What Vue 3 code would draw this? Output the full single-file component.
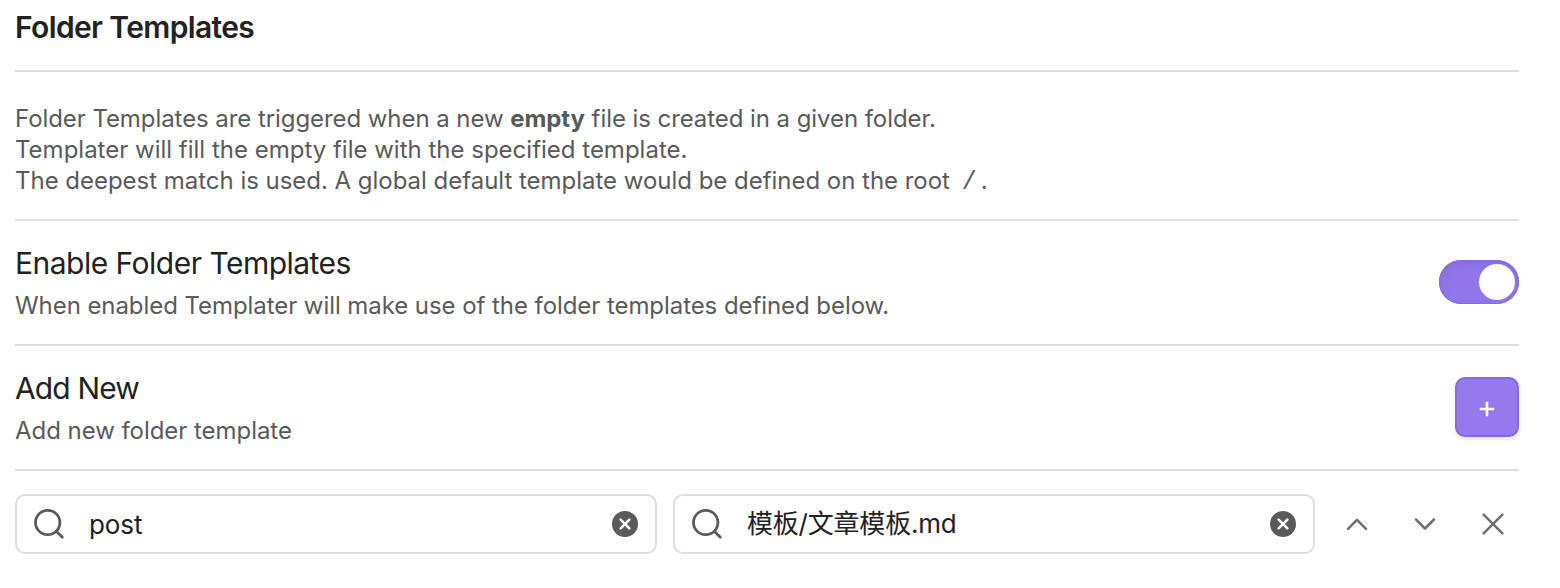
<script setup>
import { ref } from 'vue'

const enabled = ref(true)
const fields = ref([
  { value: 'post', cls: 'latin' },
  { value: '模板/文章模板.md', cls: 'cjk' },
])
</script>

<template>
  <main class="settings">
    <header class="heading"><h1>Folder Templates</h1></header>

    <section class="info">
      <p class="l1">Folder Templates are triggered when a new <strong>empty</strong> file is created in a given folder.</p>
      <p class="l2">Templater will fill the empty file with the specified template.</p>
      <p class="l3">The deepest match is used. A global default template would be defined on the root <code>/</code>.</p>
    </section>

    <section class="item">
      <div>
        <h2 class="n1">Enable Folder Templates</h2>
        <p class="desc d1">When enabled Templater will make use of the folder templates defined below.</p>
      </div>
      <button class="toggle" :class="{ on: enabled }" role="switch" :aria-checked="enabled" @click="enabled = !enabled">
        <span class="thumb"></span>
      </button>
    </section>

    <section class="item">
      <div>
        <h2 class="n2">Add New</h2>
        <p class="desc d2">Add new folder template</p>
      </div>
      <button class="add">
        <svg width="16" height="16" viewBox="0 0 16 16"><path d="M8 .8v14.4M.8 8h14.4" /></svg>
      </button>
    </section>

    <section class="template-row">
      <div v-for="(f, i) in fields" :key="i" class="search">
        <svg class="glass" width="34" height="34" viewBox="0 0 34 34">
          <circle cx="15.7" cy="15.5" r="12.2" /><path d="M24.5 24.5L30.3 30.3" />
        </svg>
        <span class="value" :class="f.cls">{{ f.value }}</span>
        <svg class="clear" width="26" height="26" viewBox="0 0 26 26">
          <circle cx="13" cy="13" r="13" /><path d="M8.6 8.6l8.8 8.8M17.4 8.6l-8.8 8.8" />
        </svg>
      </div>
      <div class="actions">
        <svg width="24" height="24" viewBox="0 0 24 24"><path d="M3 16.8L12 7.8L21 16.8" /></svg>
        <svg width="24" height="24" viewBox="0 0 24 24"><path d="M3 7.5L12 16.5L21 7.5" /></svg>
        <svg width="24" height="24" viewBox="0 0 24 24"><path d="M2.6 2.6L21.4 21.4M21.4 2.6L2.6 21.4" /></svg>
      </div>
    </section>
  </main>
</template>

<style>
body { background: #fff; }
</style>

<style scoped>
* { box-sizing: border-box; }
.settings {
  height: 588px;
  padding: 0 41px 0 15px;
  overflow: hidden;
  background: #fff;
  color: #222;
  font-family: Inter, "Noto Sans CJK SC", sans-serif;
}
h1, h2, p { margin: 0; }
.heading { height: 72px; padding-top: 8px; border-bottom: 2px solid #dedede; }
h1 { font-size: 30px; line-height: 39px; font-weight: 600; letter-spacing: -0.63px; }
.info {
  height: 149px;
  padding-top: 31px;
  border-bottom: 2px solid #dedede;
  color: #5a5a5a;
  font-size: 24px;
  line-height: 31px;
  white-space: nowrap;
}
.info strong { font-weight: 700; }
.l1 { letter-spacing: -0.07px; }
.l3 { letter-spacing: -0.025px; }
code { font-family: "Liberation Mono", monospace; font-size: 25px; line-height: 1; padding: 0 4px 0 5px; }
.item {
  height: 125px;
  display: flex;
  align-items: flex-start;
  justify-content: space-between;
  padding-top: 23px;
  border-bottom: 2px solid #dedede;
}
h2 { font-size: 30px; line-height: 39px; font-weight: 400; }
.n1 { letter-spacing: -0.51px; }
.n2 { letter-spacing: -0.85px; }
.desc { margin-top: 7px; color: #5a5a5a; font-size: 24px; line-height: 31px; }
.d1 { letter-spacing: -0.067px; }
.d2 { letter-spacing: -0.045px; }
button { border: 0; padding: 0; }
.toggle {
  width: 80px;
  height: 44px;
  margin-top: 16px;
  padding: 4px;
  display: flex;
  border-radius: 22px;
  background: #aaa;
}
.toggle.on {
  justify-content: flex-end;
  background: #9176ec;
  box-shadow: inset 0 0 0 1px #866cd8, inset 0 4px 10px rgba(90, 70, 170, .2);
}
.thumb { width: 36px; height: 36px; border-radius: 50%; background: #fff; }
.add {
  width: 64px;
  height: 60px;
  margin-top: 8px;
  display: grid;
  place-items: center;
  padding-top: 4px;
  border: 2px solid #866cd4;
  border-radius: 10px;
  background: #9679ef;
  box-shadow: 0 2px 4px rgba(0, 0, 0, .12);
}
.add path { stroke: #fff; stroke-width: 2.6; }
.template-row { display: flex; gap: 16px; padding-top: 23px; }
.search {
  width: 642px;
  height: 60px;
  display: flex;
  align-items: center;
  padding: 0 17px 0 15px;
  border: 2px solid #dedede;
  border-radius: 10px;
}
.glass { fill: none; stroke: #5a5a5a; stroke-width: 2.8; stroke-linecap: round; }
.value { flex: 1; margin-left: 23px; font-size: 26px; line-height: 36px; white-space: nowrap; }
.latin { padding-top: 2px; letter-spacing: -0.1px; }
.cjk { letter-spacing: -0.2px; }
.clear circle { fill: #5a5a5a; }
.clear path { stroke: #fff; stroke-width: 2.5; stroke-linecap: round; }
.actions { display: flex; align-items: center; gap: 44px; margin-left: 14px; }
.actions path { fill: none; stroke: #707070; stroke-width: 2.5; stroke-linecap: round; stroke-linejoin: round; }
</style>
